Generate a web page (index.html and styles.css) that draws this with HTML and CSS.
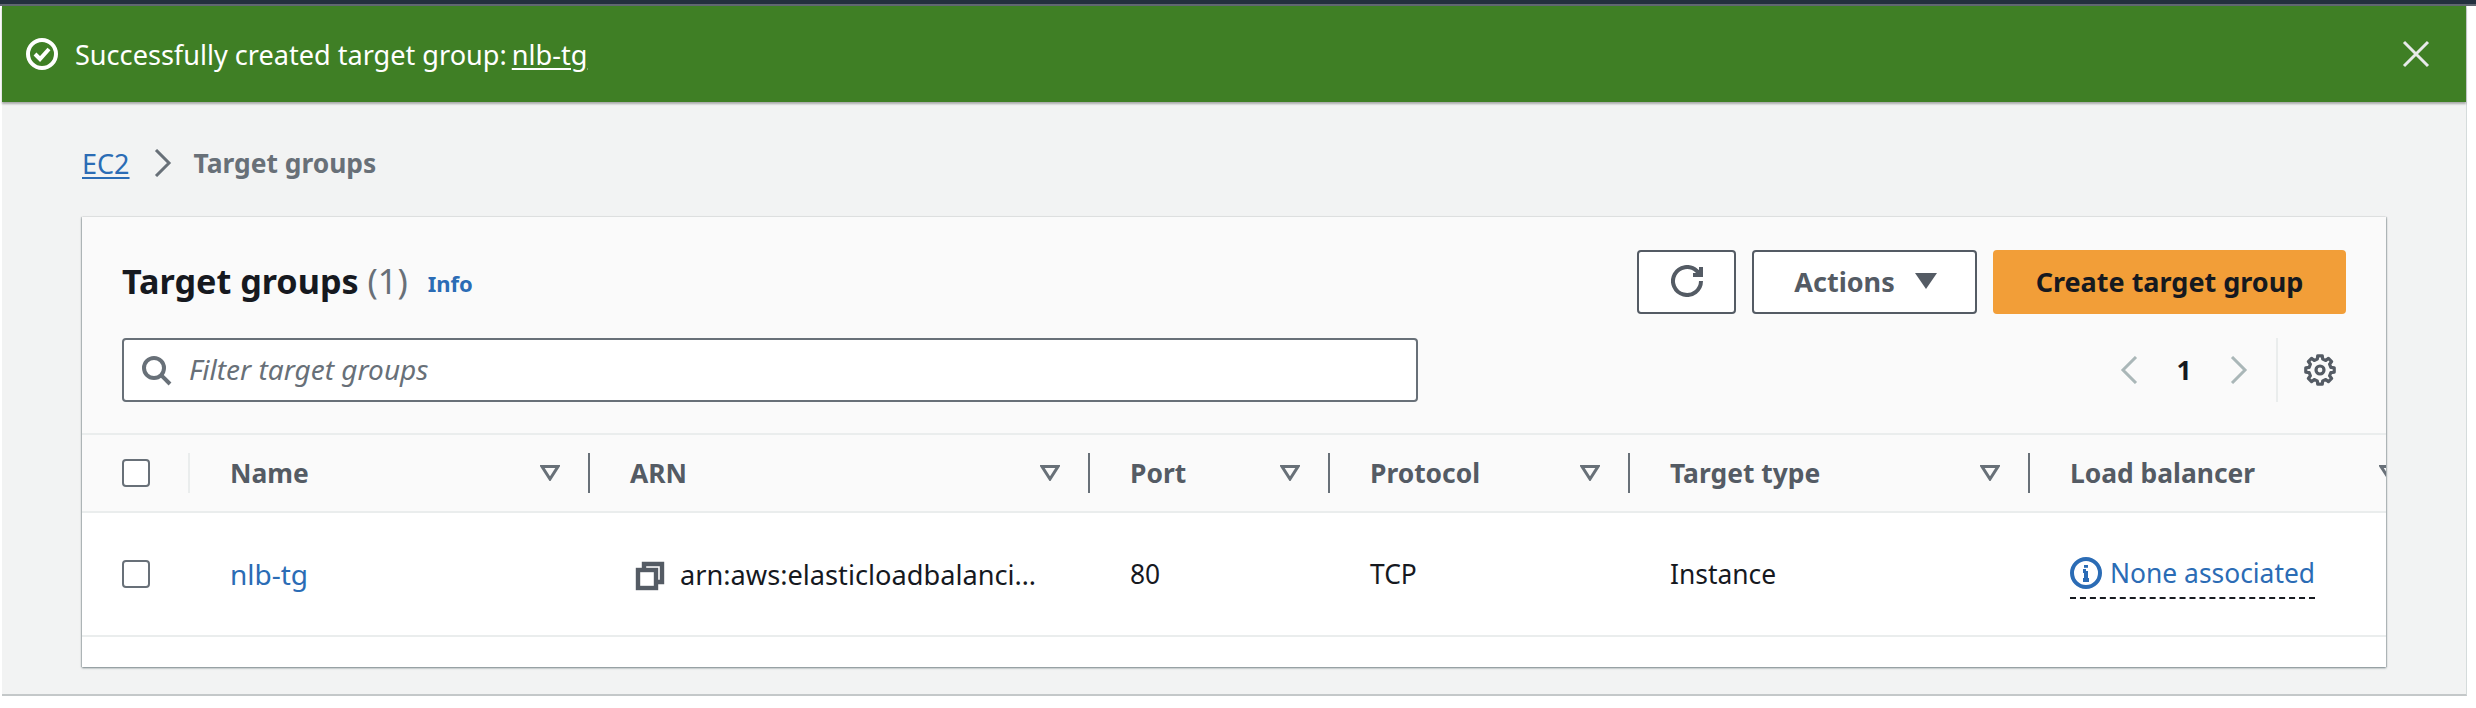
FILE: index.html
```html
<!DOCTYPE html>
<html lang="en">
<head>
    <meta charset="UTF-8">
    <title>Target groups | EC2</title>
    <link rel="stylesheet" href="styles.css">
</head>
<body>
    <div class="topbar"></div>
    <div class="main">
        <div class="flash">
            <svg class="icon flash-icon" viewBox="0 0 16 16"><circle cx="8" cy="8" r="7"/><path d="M4.5 8l2.5 2.5 4.5-5"/></svg>
            <span class="flash-text">Successfully created target group: <a href="#">nlb-tg</a></span>
            <svg class="flash-close" viewBox="0 0 28 28"><path d="M2 2l24 24M26 2L2 26"/></svg>
        </div>

        <nav class="breadcrumb">
            <a href="#">EC2</a>
            <svg class="crumb-sep" viewBox="0 0 18 28"><path d="M2 1l13 13L2 27"/></svg>
            <span>Target groups</span>
        </nav>

        <div class="card">
            <div class="card-head">
                <div class="head-row">
                    <h1>Target groups <span class="count">(1)</span></h1>
                    <a class="info" href="#">Info</a>
                    <div class="actions">
                        <button class="btn btn-icon"><svg class="icon" viewBox="0 0 16 16"><path d="M11 5h4V1"/><path d="M15 8a7 7 0 1 1-2.2-5.1L15 5"/></svg></button>
                        <button class="btn btn-actions">Actions <svg class="caret" viewBox="0 0 22 16"><path d="M0 0h22L11 16z"/></svg></button>
                        <button class="btn btn-primary">Create target group</button>
                    </div>
                </div>
                <div class="filter-row">
                    <div class="search">
                        <svg class="icon search-icon" viewBox="0 0 16 16"><circle cx="7" cy="7" r="5"/><path d="M10.7 10.7L15 15"/></svg>
                        <input type="text" placeholder="Filter target groups">
                    </div>
                    <div class="pager">
                        <svg class="pager-arrow" viewBox="0 0 18 28"><path d="M16 1L3 14l13 13"/></svg>
                        <span class="page-num">1</span>
                        <svg class="pager-arrow" viewBox="0 0 18 28"><path d="M2 1l13 13L2 27"/></svg>
                        <span class="pager-sep"></span>
                        <svg class="icon gear" viewBox="0 0 16 16"><circle cx="8" cy="8" r="2"/><path d="M6.87 .89h2.26l.22 1.68 1.53.63 1.35-1.03 1.6 1.6-1.03 1.35.63 1.53 1.68.22v2.26l-1.68.22-.63 1.53 1.03 1.35-1.6 1.6-1.35-1.03-1.53.63-.22 1.68H6.87l-.22-1.68-1.53-.63-1.35 1.03-1.6-1.6 1.03-1.35-.63-1.53-1.68-.22V6.87l1.68-.22.63-1.53-1.03-1.35 1.6-1.6 1.35 1.03 1.53-.63z"/></svg>
                    </div>
                </div>
            </div>

            <div class="table-wrap">
                <table>
                    <thead>
                        <tr>
                            <th class="col-check"><div class="th-inner"><span class="checkbox"></span><span class="sep sep-light"></span></div></th>
                            <th class="col-name"><div class="th-inner">Name<svg class="sort" viewBox="0 0 20 16"><path d="M2 1.5h16L10 14z"/></svg><span class="sep"></span></div></th>
                            <th class="col-arn"><div class="th-inner">ARN<svg class="sort" viewBox="0 0 20 16"><path d="M2 1.5h16L10 14z"/></svg><span class="sep"></span></div></th>
                            <th class="col-port"><div class="th-inner">Port<svg class="sort" viewBox="0 0 20 16"><path d="M2 1.5h16L10 14z"/></svg><span class="sep"></span></div></th>
                            <th class="col-proto"><div class="th-inner">Protocol<svg class="sort" viewBox="0 0 20 16"><path d="M2 1.5h16L10 14z"/></svg><span class="sep"></span></div></th>
                            <th class="col-type"><div class="th-inner">Target type<svg class="sort" viewBox="0 0 20 16"><path d="M2 1.5h16L10 14z"/></svg><span class="sep"></span></div></th>
                            <th class="col-lb"><div class="th-inner">Load balancer<svg class="sort" viewBox="0 0 20 16"><path d="M2 1.5h16L10 14z"/></svg></div></th>
                        </tr>
                    </thead>
                    <tbody>
                        <tr>
                            <td class="cell-check"><span class="checkbox"></span></td>
                            <td><a class="tg-link" href="#">nlb-tg</a></td>
                            <td>
                                <div class="arn">
                                    <svg class="icon copy" viewBox="0 0 16 16"><path d="M5 5V2h9v9h-3"/><rect x="2" y="5" width="9" height="9"/></svg>
                                    <span class="arn-text">arn:aws:elasticloadbalanci…</span>
                                </div>
                            </td>
                            <td>80</td>
                            <td>TCP</td>
                            <td>Instance</td>
                            <td class="cell-lb">
                                <a class="lb-none" href="#">
                                    <svg class="icon info-icon" viewBox="0 0 16 16"><circle cx="8" cy="8" r="7"/><path d="M8 7v4.5M6.5 11.5h3M6.5 7H8"/><path d="M8 4v1.4"/></svg>
                                    None associated
                                </a>
                            </td>
                        </tr>
                    </tbody>
                </table>
            </div>
            <div class="card-foot"></div>
        </div>
    </div>
</body>
</html>
```

FILE: styles.css
```css
* {
    box-sizing: border-box;
}
html, body {
    height: 708px;
    overflow: hidden;
}
body {
    margin: 0;
    background-color: #fff;
    font-family: "Noto Sans", Roboto, sans-serif;
    font-size: 26.4px;
    color: #16191f;
}
a {
    color: #2b6cb5;
    text-decoration: none;
}
.icon {
    width: 32px;
    height: 32px;
    fill: none;
    stroke: currentColor;
    stroke-width: 2;
    flex: none;
}
.topbar {
    height: 6px;
    background-color: #232f3e;
    border-bottom: 2px solid #5f6670;
}
.main {
    width: 2465px;
    height: 690px;
    margin-left: 2px;
    background-color: #f2f3f3;
    border-right: 1px solid #d5dbdb;
    border-bottom: 2px solid #c4c8c9;
}
.flash {
    display: flex;
    align-items: center;
    height: 96px;
    padding: 0 36px 0 24px;
    background-color: #3f7f25;
    box-shadow: 0 2px 2px rgba(0, 0, 0, 0.3);
    color: #fff;
    font-size: 27.1px;
}
.flash-text {
    margin-left: 17px;
}
.flash-text a {
    margin-left: -2px;
    color: #fff;
    text-decoration: underline;
    text-underline-offset: 3px;
}
.flash-close {
    width: 28px;
    height: 28px;
    margin-left: auto;
    fill: none;
    stroke: #e8eaea;
    stroke-width: 3;
}
.breadcrumb {
    display: flex;
    align-items: center;
    gap: 22px;
    height: 115px;
    padding: 7px 0 0 80px;
    color: #687078;
    font-weight: 700;
}
.breadcrumb a {
    margin-right: 2px;
    font-size: 27px;
    font-weight: 400;
    text-decoration: underline;
    text-underline-offset: 3px;
}
.crumb-sep {
    width: 18px;
    height: 28px;
    fill: none;
    stroke: #687078;
    stroke-width: 3;
}
.card {
    width: 2304px;
    margin-left: 80px;
    background-color: #fff;
    box-shadow: 0 1px 2px rgba(0, 28, 36, 0.5), 1px 0 1px rgba(0, 28, 36, 0.15), -1px 0 1px rgba(0, 28, 36, 0.15);
}
.card-head {
    height: 218px;
    padding: 33px 40px 0;
    background-color: #fafafa;
    border-bottom: 2px solid #eaeded;
}
.head-row {
    display: flex;
    align-items: center;
    height: 64px;
}
h1 {
    margin: 0 0 3px;
    font-size: 34.2px;
    font-weight: 700;
}
.count {
    color: #687078;
    font-weight: 400;
}
.info {
    margin: 2px 0 0 20px;
    font-size: 22px;
    font-weight: 700;
}
.actions {
    display: flex;
    gap: 16px;
    margin-left: auto;
}
.btn {
    display: flex;
    align-items: center;
    justify-content: center;
    height: 64px;
    padding: 0 0 2px;
    border: 2px solid #545b64;
    border-radius: 4px;
    background-color: #fff;
    color: #545b64;
    font-family: inherit;
    font-size: 27px;
    font-weight: 700;
}
.btn-icon {
    width: 99px;
}
.btn-actions {
    width: 225px;
    padding-left: 2px;
    gap: 20px;
}
.caret {
    width: 22px;
    height: 16px;
    fill: #545b64;
}
.btn-primary {
    width: 353px;
    border-color: #f29e38;
    background-color: #f29e38;
    color: #16191f;
}
.filter-row {
    display: flex;
    align-items: center;
    margin-top: 24px;
}
.search {
    display: flex;
    align-items: center;
    gap: 17px;
    width: 1296px;
    height: 64px;
    padding-left: 16px;
    border: 2px solid #687078;
    border-radius: 4px;
    background-color: #fff;
    color: #687078;
}
.search input {
    flex: 1;
    border: 0;
    outline: 0;
    padding: 0 0 3px;
    background: transparent;
    font-family: inherit;
    font-size: 28px;
    font-style: italic;
}
.search input::placeholder {
    color: #687078;
}
.pager {
    display: flex;
    align-items: center;
    margin-left: auto;
    color: #545b64;
}
.pager-arrow {
    width: 18px;
    height: 28px;
    fill: none;
    stroke: #aab7b8;
    stroke-width: 3;
}
.page-num {
    width: 92px;
    color: #16191f;
    font-weight: 700;
    text-align: center;
}
.pager-sep {
    width: 2px;
    height: 64px;
    margin: 0 26px 0 28px;
    background-color: #eaeded;
}
.gear {
    margin-right: 10px;
    stroke-width: 1.6;
    stroke-linejoin: round;
}
.table-wrap {
    overflow: hidden;
}
table {
    width: 2347px;
    table-layout: fixed;
    border-collapse: separate;
    border-spacing: 0;
}
th {
    height: 78px;
    padding: 0;
    background-color: #fafafa;
    border-bottom: 2px solid #eaeded;
    color: #545b64;
    font-weight: 700;
    text-align: left;
}
.col-check { width: 108px; }
.col-name { width: 400px; }
.col-arn { width: 500px; }
.col-port { width: 240px; }
.col-proto { width: 300px; }
.col-type { width: 400px; }
.col-lb { width: 399px; }
.th-inner {
    display: flex;
    align-items: center;
    padding-left: 40px;
}
.sort {
    width: 20px;
    height: 16px;
    margin: 0 28px 0 auto;
    fill: none;
    stroke: #687078;
    stroke-width: 3;
}
.col-lb .sort {
    margin-right: 30px;
}
.sep {
    width: 2px;
    height: 40px;
    background-color: #687078;
}
.sep-light {
    margin-left: auto;
    background-color: #eaeded;
}
.checkbox {
    display: block;
    width: 28px;
    height: 28px;
    border: 2px solid #687078;
    border-radius: 4px;
    background-color: #fff;
}
td {
    height: 124px;
    padding: 0 0 0 40px;
    border-bottom: 2px solid #eaeded;
    background-color: #fff;
}
.tg-link {
    font-size: 28px;
}
.arn {
    display: flex;
    align-items: center;
    gap: 14px;
    padding-left: 4px;
}
.copy {
    margin-top: 3px;
    color: #545b64;
    stroke-width: 2.2;
}
.arn-text {
    font-size: 27.2px;
    white-space: nowrap;
}
.cell-lb {
    padding-top: 6px;
}
.lb-none {
    display: inline-flex;
    align-items: center;
    gap: 8px;
    padding-bottom: 6px;
    border-bottom: 2px dashed #16191f;
}
.card-foot {
    height: 30px;
    background-color: #fff;
}
```
